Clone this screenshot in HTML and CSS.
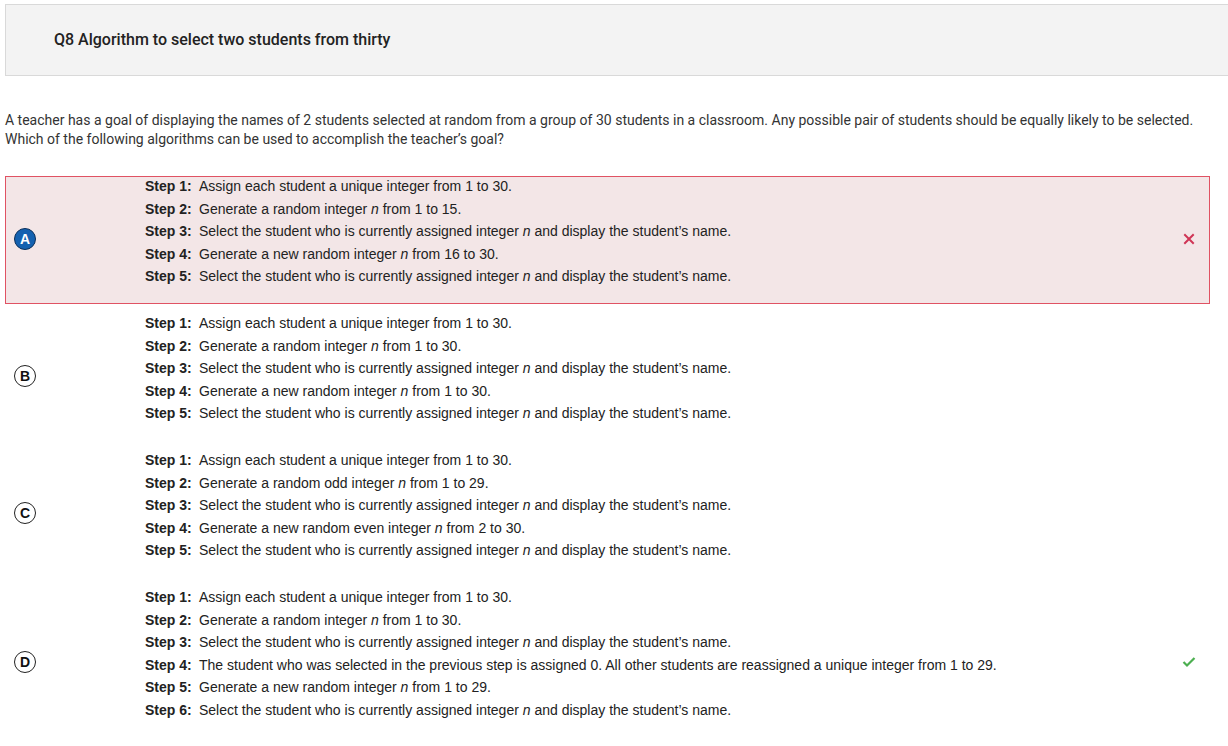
FILE: index.html
```html
<!DOCTYPE html>
<html>
<head>
<meta charset="utf-8">
<link rel="stylesheet" href="styles.css">
</head>
<body>
<div class="header"><h1 class="title">Q8 Algorithm to select two students from thirty</h1></div>
<p class="question">A teacher has a goal of displaying the names of 2 students selected at random from a group of 30 students in a classroom. Any possible pair of students should be equally likely to be selected. Which of the following algorithms can be used to accomplish the teacher’s goal?</p>

<div class="options">
  <div class="option wrong">
    <div class="letter-col"><span class="letter selected">A</span></div>
    <div class="steps">
      <div class="step"><b>Step 1:</b><span>Assign each student a unique integer from 1 to 30.</span></div>
      <div class="step"><b>Step 2:</b><span>Generate a random integer <i>n</i> from 1 to 15.</span></div>
      <div class="step"><b>Step 3:</b><span>Select the student who is currently assigned integer <i>n</i> and display the student’s name.</span></div>
      <div class="step"><b>Step 4:</b><span>Generate a new random integer <i>n</i> from 16 to 30.</span></div>
      <div class="step"><b>Step 5:</b><span>Select the student who is currently assigned integer <i>n</i> and display the student’s name.</span></div>
    </div>
    <div class="mark"><svg width="12" height="12" viewBox="0 0 12 12"><path d="M2 2 L10 10 M10 2 L2 10" stroke="#cf3556" stroke-width="2" stroke-linecap="square"/></svg></div>
  </div>

  <div class="option">
    <div class="letter-col"><span class="letter">B</span></div>
    <div class="steps">
      <div class="step"><b>Step 1:</b><span>Assign each student a unique integer from 1 to 30.</span></div>
      <div class="step"><b>Step 2:</b><span>Generate a random integer <i>n</i> from 1 to 30.</span></div>
      <div class="step"><b>Step 3:</b><span>Select the student who is currently assigned integer <i>n</i> and display the student’s name.</span></div>
      <div class="step"><b>Step 4:</b><span>Generate a new random integer <i>n</i> from 1 to 30.</span></div>
      <div class="step"><b>Step 5:</b><span>Select the student who is currently assigned integer <i>n</i> and display the student’s name.</span></div>
    </div>
    <div class="mark"></div>
  </div>

  <div class="option">
    <div class="letter-col"><span class="letter">C</span></div>
    <div class="steps">
      <div class="step"><b>Step 1:</b><span>Assign each student a unique integer from 1 to 30.</span></div>
      <div class="step"><b>Step 2:</b><span>Generate a random odd integer <i>n</i> from 1 to 29.</span></div>
      <div class="step"><b>Step 3:</b><span>Select the student who is currently assigned integer <i>n</i> and display the student’s name.</span></div>
      <div class="step"><b>Step 4:</b><span>Generate a new random even integer <i>n</i> from 2 to 30.</span></div>
      <div class="step"><b>Step 5:</b><span>Select the student who is currently assigned integer <i>n</i> and display the student’s name.</span></div>
    </div>
    <div class="mark"></div>
  </div>

  <div class="option">
    <div class="letter-col"><span class="letter">D</span></div>
    <div class="steps">
      <div class="step"><b>Step 1:</b><span>Assign each student a unique integer from 1 to 30.</span></div>
      <div class="step"><b>Step 2:</b><span>Generate a random integer <i>n</i> from 1 to 30.</span></div>
      <div class="step"><b>Step 3:</b><span>Select the student who is currently assigned integer <i>n</i> and display the student’s name.</span></div>
      <div class="step"><b>Step 4:</b><span>The student who was selected in the previous step is assigned 0. All other students are reassigned a unique integer from 1 to 29.</span></div>
      <div class="step"><b>Step 5:</b><span>Generate a new random integer <i>n</i> from 1 to 29.</span></div>
      <div class="step"><b>Step 6:</b><span>Select the student who is currently assigned integer <i>n</i> and display the student’s name.</span></div>
    </div>
    <div class="mark"><svg width="14" height="12" viewBox="0 0 14 12"><path d="M1.5 6 L5 9.5 L12.5 2" fill="none" stroke="#4caf50" stroke-width="2.2"/></svg></div>
  </div>
</div>
</body>
</html>
```

FILE: styles.css
```css
html, body {
  margin: 0;
  padding: 0;
  background: #fff;
}
body {
  font-family: Roboto, "Liberation Sans", sans-serif;
  color: #333;
  width: 1228px;
  overflow: hidden;
}
.header {
  margin: 4px 0 0 5px;
  height: 72px;
  background: #f3f3f3;
  border: 1px solid #d9d9d9;
  border-right: none;
  display: flex;
  align-items: center;
  padding-left: 48px;
  padding-bottom: 2px;
  box-sizing: border-box;
}
.title {
  margin: 0;
  font-size: 16px;
  font-weight: 500;
  color: #222;
}
.question {
  margin: 35px 0 0 5px;
  font-size: 14px;
  line-height: 18.5px;
  color: #333;
  width: 1215px;
}
.options {
  margin: 28px 0 0 5px;
  width: 1205px;
  display: flex;
  flex-direction: column;
  gap: 9px;
}
.option {
  display: flex;
  align-items: center;
  border: 1px solid transparent;
  padding: 0 0 15px 0;
  box-sizing: border-box;
}
.option.wrong {
  border-color: #e05263;
  background: #f3e6e7;
}
.letter-col {
  width: 139px;
  display: flex;
  padding-left: 8px;
  box-sizing: border-box;
  margin-bottom: -14px;
}
.letter {
  width: 22px;
  height: 22px;
  border: 1.5px solid #222;
  border-radius: 50%;
  box-sizing: border-box;
  display: flex;
  align-items: center;
  justify-content: center;
  font-family: "Liberation Sans", Arial, sans-serif;
  font-weight: bold;
  font-size: 14px;
  color: #111;
}
.letter.selected {
  background: #1461b0;
  color: #fff;
  border-color: #0a2f5a;
}
.steps {
  flex: 1;
  font-family: "Liberation Sans", Arial, sans-serif;
  font-size: 14px;
  color: #222;
  margin-top: -2px;
}
.step {
  display: flex;
  line-height: 22.6px;
}
.step b {
  width: 54px;
  flex: none;
  font-weight: bold;
}
.step i {
  font-style: italic;
}
.mark {
  width: 40px;
  display: flex;
  justify-content: center;
  margin-bottom: -14px;
}
```
